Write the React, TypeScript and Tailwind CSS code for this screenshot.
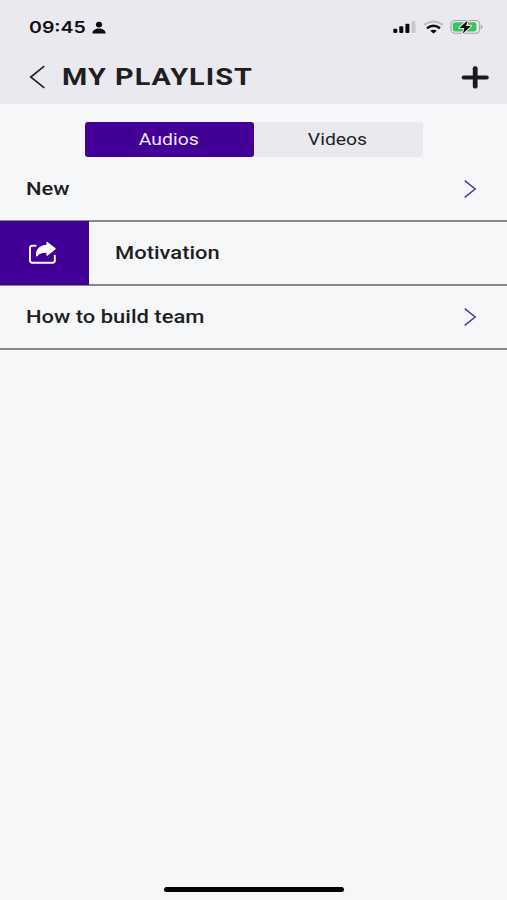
import { useState } from "react";

const playlists = [
  { id: 1, name: "New" },
  { id: 2, name: "Motivation", swiped: true },
  { id: 3, name: "How to build team" },
];

function StatusBar() {
  return (
    <div className="flex h-[54px] items-center justify-between pl-[29px] pr-[23px]">
      <div className="flex items-center">
        <span className="w-[63px] whitespace-nowrap font-['Inter',sans-serif] text-base font-semibold leading-5 text-[#101014]">
          <span className="inline-block origin-left scale-x-[1.22]">09:45</span>
        </span>
        <svg width="14" height="13" viewBox="0 0 14 13" fill="#0a0a0c">
          <ellipse cx="7" cy="3.6" rx="3.1" ry="2.9" />
          <path d="M0.4 12.4C0.4 9.2 3.4 7.6 7 7.6s6.6 1.6 6.6 4.8z" />
        </svg>
      </div>

      {/* SIGNAL, WIFI, BATTERY */}
      <div className="flex items-center">
        <svg width="23" height="14" viewBox="0 0 23 14" fill="#0a0a0c">
          <rect x="0.3" y="8.7" width="4" height="4.3" rx="1" />
          <rect x="6.3" y="6.3" width="4" height="6.7" rx="1" />
          <rect x="12.4" y="3.8" width="4" height="9.2" rx="1" />
          <rect x="18.5" y="1" width="4" height="12" rx="1" fill="#c9c8ce" />
        </svg>
        <svg className="ml-[7px]" width="21" height="14" viewBox="0 0 21 14" fill="none">
          <path d="M1 4.8Q10.5 -1.8 20 4.8" stroke="#bdbcc2" strokeWidth="2.2" />
          <path d="M4 8.2Q10.5 3.2 17 8.2" stroke="#0a0a0c" strokeWidth="2.4" />
          <path d="M7.2 10.8Q10.5 8.6 13.8 10.8L10.5 13.4z" fill="#0a0a0c" />
        </svg>
        <svg className="ml-[6px] mr-px" width="33" height="16" viewBox="0 0 33 16">
          <rect x="0.9" y="1.5" width="28.8" height="12.8" rx="4" fill="none" stroke="#a3a3a9" strokeWidth="1.1" />
          <rect x="2.8" y="3.2" width="23.6" height="9.4" rx="2.4" fill="#35c759" />
          <path d="M31 5.8q1.6 0.5 1.6 2.1t-1.6 2.1z" fill="#a3a3a9" />
          <path
            d="M17.6 1.4L9.4 9h5L12.8 14.4L21 6.9h-5z"
            fill="#0a0a0c"
            stroke="#eae9ef"
            strokeWidth="2.2"
            strokeLinejoin="round"
            paintOrder="stroke"
          />
        </svg>
      </div>
    </div>
  );
}

function Chevron() {
  return (
    <svg width="14" height="20" viewBox="0 0 14 20" fill="none" stroke="#54359a" strokeWidth="1.5">
      <path d="M1.7 1.6L12.2 10L1.7 18.4" />
    </svg>
  );
}

export default function App() {
  const [tab, setTab] = useState("Audios");

  return (
    <div className="flex h-[900px] w-[507px] flex-col overflow-hidden bg-[#f6f7f9] font-['Roboto',sans-serif] text-[#1e1e23]">
      {/* HEADER */}
      <header className="h-[104px] bg-[#eae9ef]">
        <StatusBar />
        <div className="flex h-[46px] items-center pl-[29px] pr-[18px]">
          <button aria-label="Back">
            <svg width="17" height="24" viewBox="0 0 17 24" fill="none" stroke="#1e1e23" strokeWidth="1.6">
              <path d="M15.3 1.2L1.7 12L15.3 22.8" />
            </svg>
          </button>
          <h1 className="ml-[16px] origin-left scale-x-[1.2] whitespace-nowrap text-2xl font-bold tracking-[0.9px]">
            MY PLAYLIST
          </h1>
          <button className="ml-auto" aria-label="Add">
            <svg width="28" height="24" viewBox="0 0 28 24" fill="#1a1a1f">
              <rect x="0.7" y="10.5" width="27" height="4" rx="1.8" />
              <rect x="11.8" y="1.2" width="4.8" height="22.4" rx="2" />
            </svg>
          </button>
        </div>
      </header>

      {/* TABS */}
      <div className="mx-auto mt-[18px] flex h-[35px] w-[338px] rounded-[3px] bg-[#eae9ef]">
        <button
          onClick={() => setTab("Audios")}
          className={`w-1/2 rounded-[3px] text-base ${tab === "Audios" ? "bg-[#430096] text-[#f0eaf8]" : ""}`}
        >
          <span className="inline-block scale-x-[1.21]">Audios</span>
        </button>
        <button
          onClick={() => setTab("Videos")}
          className={`w-1/2 rounded-[3px] pr-px text-base ${tab === "Videos" ? "bg-[#430096] text-[#f0eaf8]" : ""}`}
        >
          <span className="inline-block scale-x-[1.21]">Videos</span>
        </button>
      </div>

      {/* PLAYLISTS */}
      <ul className="mt-px">
        {playlists.map((item) => (
          <li key={item.id} className="flex h-16 items-center border-b-2 border-[#88898b]">
            {item.swiped && (
              <button className="flex h-16 w-[89px] items-center bg-[#430096] pl-[28px]" aria-label="Share">
                <svg width="29" height="24" viewBox="0 0 29 24" fill="none">
                  <path
                    d="M7.6 4.8H4.2Q2 4.8 2 7V19.6Q2 21.8 4.2 21.8H24.6Q26.8 21.8 26.8 19.6V14.6"
                    stroke="#fff"
                    strokeWidth="1.9"
                    strokeLinecap="round"
                  />
                  <path
                    d="M19 1.4L27.2 7.8L19 14.2V11.2C14 10.8 11.2 12 8.6 14.8C8 8.8 11.6 4.8 19 4.4z"
                    fill="#fff"
                    stroke="#fff"
                    strokeWidth="1.2"
                    strokeLinejoin="round"
                  />
                </svg>
              </button>
            )}
            <span className="ml-[26px] origin-left scale-x-[1.22] whitespace-nowrap text-lg font-medium">{item.name}</span>
            {!item.swiped && (
              <span className="ml-auto mr-[30px]">
                <Chevron />
              </span>
            )}
          </li>
        ))}
      </ul>

      {/* HOME INDICATOR */}
      <div className="mx-auto mb-2 mt-auto h-[5px] w-[180px] rounded-full bg-black" />
    </div>
  );
}
